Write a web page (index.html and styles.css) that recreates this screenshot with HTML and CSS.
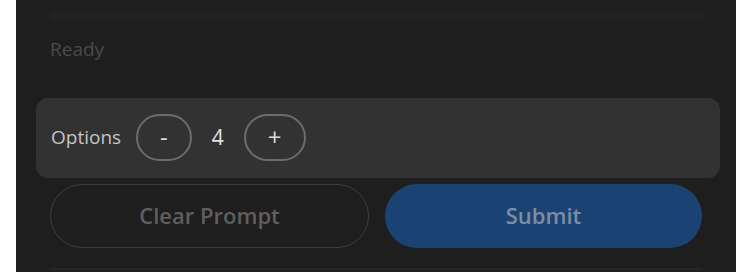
FILE: index.html
```html
<!DOCTYPE html>
<html>
<head>
<meta charset="utf-8">
<link rel="stylesheet" href="styles.css">
</head>
<body>
<div class="panel">
  <div class="prompt-bar"></div>
  <div class="status">Ready</div>
  <div class="options">
    <span class="options-label">Options</span>
    <button class="step">-</button>
    <span class="count">4</span>
    <button class="step">+</button>
  </div>
  <div class="actions">
    <button class="btn btn-clear">Clear Prompt</button>
    <button class="btn btn-submit">Submit</button>
  </div>
  <div class="footer-line"></div>
</div>
</body>
</html>
```

FILE: styles.css
```css
html, body {
  margin: 0;
  padding: 0;
  background: #ffffff;
  height: 272px;
  overflow: hidden;
}
body {
  padding: 0 16px;
  font-family: "Open Sans", "Noto Sans", sans-serif;
}
.panel {
  background: #1e1e1e;
  height: 272px;
  padding: 12px 34px 0 34px;
  box-sizing: border-box;
  display: flex;
  flex-direction: column;
}
.prompt-bar {
  height: 8px;
  background: #222222;
  margin-right: -1px;
}
.status {
  color: #4b4b4b;
  font-size: 19px;
  line-height: 26px;
  margin-top: 16px;
  height: 26px;
}
.options {
  margin: 36px -18px 0 -14px;
  height: 80px;
  box-sizing: border-box;
  background: #323232;
  border-radius: 12px;
  display: flex;
  align-items: center;
  padding: 0 0 2px 15px;
  gap: 17px;
}
.options-label {
  color: #c4c4c4;
  font-size: 19px;
  margin-right: -2px;
}
.step {
  height: 47px;
  padding: 0 22px;
  border: 2px solid #6c6c6c;
  border-radius: 24px;
  background: transparent;
  color: #dcdcdc;
  font-family: "Open Sans", sans-serif;
  font-size: 24px;
  line-height: 1;
}
.count {
  color: #e2e2e2;
  font-size: 21px;
  margin: 0 3px;
}
.actions {
  margin-top: 6px;
  display: flex;
  gap: 16px;
}
.btn {
  flex: 1 1 0;
  width: 0;
  padding: 0 0 3px 0;
  box-sizing: border-box;
  height: 64px;
  border-radius: 32px;
  font-family: "Open Sans", sans-serif;
  font-weight: 600;
  font-size: 22px;
}
.btn-clear {
  background: transparent;
  border: 1.5px solid #3d3d3d;
  color: #5f5f5f;
}
.btn-submit {
  background: #1a4373;
  border: none;
  color: #7c8da4;
}
.footer-line {
  margin-top: 20px;
  height: 2px;
  background: #262626;
}
```
